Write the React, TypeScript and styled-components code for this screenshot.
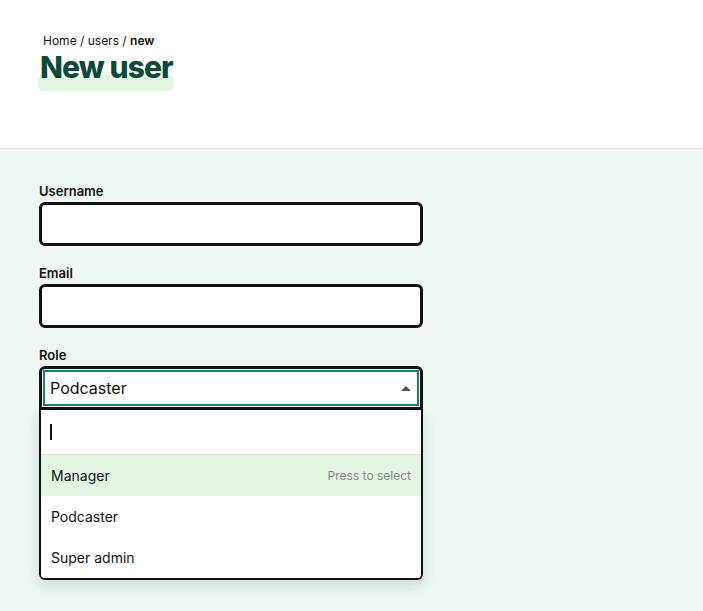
import { createGlobalStyle } from "styled-components";
import styled from "styled-components";

const GlobalStyle = createGlobalStyle`
  html, body {
    margin: 0;
    padding: 0;
    background: #edf7f4;
    font-family: Inter, "Noto Sans", sans-serif;
    color: #111;
  }
`;

const Page = styled.div`
  min-height: 611px;
  display: flex;
  flex-direction: column;
`;

const Header = styled.header`
  background: #fff;
  height: 149px;
  border-bottom: 1px solid #d6e3dc;
  padding: 33px 0 0 39px;
  box-sizing: border-box;
`;

const Breadcrumb = styled.nav`
  font-size: 12px;
  line-height: 15px;
  padding-left: 4px;
  color: #111;
  strong {
    font-weight: 600;
  }
`;

const Title = styled.h1`
  margin: 1px 0 0;
  font-size: 30px;
  line-height: 36px;
  font-weight: 800;
  letter-spacing: -0.9px;
  color: #0b4a3a;
  isolation: isolate;
`;

const Highlight = styled.span`
  position: relative;
  display: inline-block;
  padding: 0 1px;
  &::before {
    content: "";
    position: absolute;
    left: -1px;
    right: 0;
    bottom: -6px;
    height: 16px;
    border-radius: 6px;
    background: #e2f6e2;
    z-index: -1;
  }
`;

const Form = styled.main`
  padding: 34px 0 0 39px;
  display: flex;
  flex-direction: column;
  gap: 19px;
  width: 384px;
`;

const Field = styled.div`
  display: flex;
  flex-direction: column;
  gap: 2px;
`;

const Label = styled.label`
  font-size: 13px;
  line-height: 17px;
  font-weight: 600;
`;

const TextInput = styled.input`
  box-sizing: border-box;
  height: 44px;
  width: 100%;
  border: 3px solid #111;
  border-radius: 6px;
  background: #fff;
  font: inherit;
  outline: none;
`;

const Combo = styled.div`
  position: relative;
  height: 44px;
`;

const Control = styled.div`
  box-sizing: border-box;
  height: 44px;
  border: 3px solid #111;
  border-radius: 6px 6px 0 0;
  background: #fff;
  padding: 1px;
`;

const ControlInner = styled.div`
  box-sizing: border-box;
  height: 100%;
  border: 2px solid #1d7f6f;
  display: flex;
  align-items: center;
  justify-content: space-between;
  padding: 0 5px 0 5px;
  font-size: 16px;
`;

const Caret = styled.span`
  width: 0;
  height: 0;
  border-left: 5px solid transparent;
  border-right: 5px solid transparent;
  border-bottom: 5px solid #555;
  margin-right: 1px;
`;

const Menu = styled.div`
  position: absolute;
  top: 44px;
  left: 0;
  right: 0;
  background: #fff;
  border: 2px solid #111;
  border-top: none;
  border-radius: 0 0 6px 6px;
  box-shadow: 0 6px 14px rgba(20, 50, 40, 0.14);
  overflow: hidden;
`;

const SearchRow = styled.div`
  height: 44px;
  border-bottom: 1px solid #d3e4d6;
  display: flex;
  align-items: center;
  padding-left: 9px;
`;

const Cursor = styled.span`
  width: 2px;
  height: 16px;
  background: #111;
`;

const Option = styled.div<{ $active?: boolean }>`
  height: 41px;
  display: flex;
  align-items: center;
  justify-content: space-between;
  padding: 0 10px 0 10px;
  font-size: 14px;
  background: ${(p) => (p.$active ? "#e3f6e3" : "#fff")};
`;

const Hint = styled.span`
  font-size: 12px;
  color: #888;
`;

const roles = ["Manager", "Podcaster", "Super admin"];

export default function App() {
  return (
    <Page>
      <GlobalStyle />
      <Header>
        <Breadcrumb>
          Home / users / <strong>new</strong>
        </Breadcrumb>
        <Title>
          <Highlight>New user</Highlight>
        </Title>
      </Header>
      <Form>
        <Field>
          <Label>Username</Label>
          <TextInput />
        </Field>
        <Field>
          <Label>Email</Label>
          <TextInput />
        </Field>
        <Field>
          <Label>Role</Label>
          <Combo>
            <Control>
              <ControlInner>
                Podcaster
                <Caret />
              </ControlInner>
            </Control>
            <Menu>
              <SearchRow>
                <Cursor />
              </SearchRow>
              {roles.map((r, i) => (
                <Option key={r} $active={i === 0}>
                  {r}
                  {i === 0 && <Hint>Press to select</Hint>}
                </Option>
              ))}
            </Menu>
          </Combo>
        </Field>
      </Form>
    </Page>
  );
}
